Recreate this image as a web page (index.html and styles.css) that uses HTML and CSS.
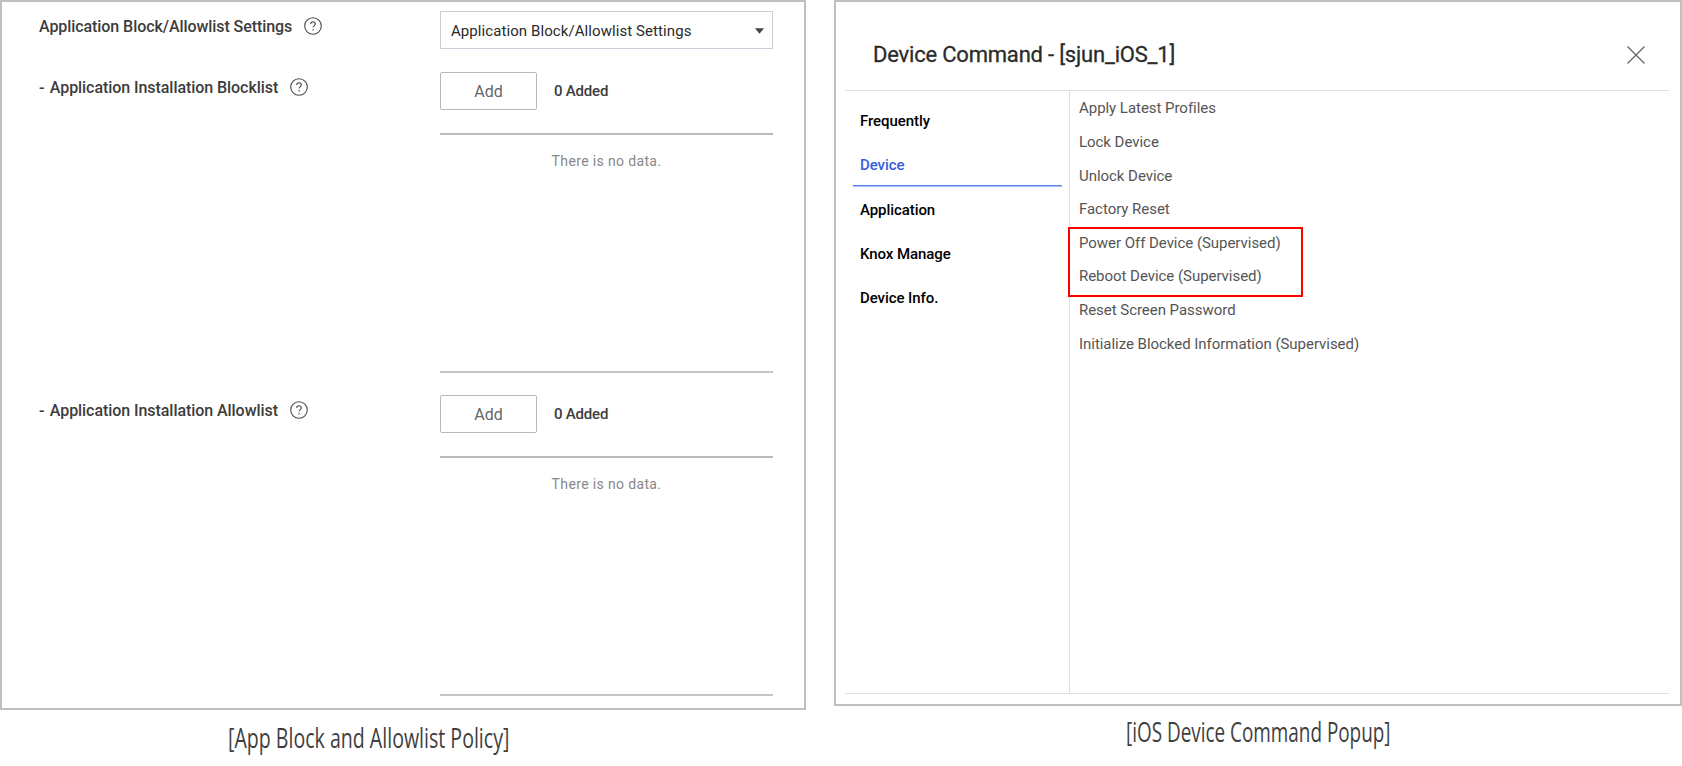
FILE: index.html
```html
<!DOCTYPE html>
<html lang="en">
<head>
<meta charset="utf-8">
<title>Knox Manage</title>
<link rel="stylesheet" href="styles.css">
</head>
<body>
<main class="page">
  <figure class="figure figure-policy">
    <section class="panel policy">
      <div class="setting setting-select">
        <div class="label"><span class="label-main">Application Block/Allowlist Settings</span><svg class="help" viewBox="0 0 18 18"><circle cx="9" cy="9" r="8.3"/><path d="M6.7 7.1C6.7 5.7 7.6 4.8 9 4.8s2.3.9 2.3 2.1c0 1.6-2.2 1.8-2.2 3.7M9.1 12v1.5"/></svg></div>
        <div class="select"><span>Application Block/Allowlist Settings</span><svg class="caret" viewBox="0 0 10 6"><path d="M0 0h10L5 6z"/></svg></div>
      </div>
      <div class="setting setting-list">
        <div class="label"><span class="label-sub"><span class="dash">-</span> Application Installation Blocklist</span><svg class="help" viewBox="0 0 18 18"><circle cx="9" cy="9" r="8.3"/><path d="M6.7 7.1C6.7 5.7 7.6 4.8 9 4.8s2.3.9 2.3 2.1c0 1.6-2.2 1.8-2.2 3.7M9.1 12v1.5"/></svg></div>
        <div class="control">
          <div class="actions"><button class="add">Add</button><span class="count">0 Added</span></div>
          <div class="list">There is no data.</div>
        </div>
      </div>
      <div class="setting setting-list">
        <div class="label"><span class="label-sub"><span class="dash">-</span> Application Installation Allowlist</span><svg class="help" viewBox="0 0 18 18"><circle cx="9" cy="9" r="8.3"/><path d="M6.7 7.1C6.7 5.7 7.6 4.8 9 4.8s2.3.9 2.3 2.1c0 1.6-2.2 1.8-2.2 3.7M9.1 12v1.5"/></svg></div>
        <div class="control">
          <div class="actions"><button class="add">Add</button><span class="count">0 Added</span></div>
          <div class="list">There is no data.</div>
        </div>
      </div>
    </section>
    <figcaption class="caption caption-policy">[App Block and Allowlist Policy]</figcaption>
  </figure>
  <figure class="figure figure-popup">
    <section class="panel popup">
      <header class="popup-head"><h1>Device Command - [sjun_iOS_1]</h1><svg class="close" viewBox="0 0 18 18"><path d="M.5.5l17 17M17.5.5l-17 17"/></svg></header>
      <div class="popup-body">
        <nav class="tabs">
          <a class="tab">Frequently</a>
          <a class="tab active">Device</a>
          <a class="tab">Application</a>
          <a class="tab">Knox Manage</a>
          <a class="tab">Device Info.</a>
        </nav>
        <ul class="commands">
          <li>Apply Latest Profiles</li>
          <li>Lock Device</li>
          <li>Unlock Device</li>
          <li>Factory Reset</li>
          <li class="marked">Power Off Device (Supervised)</li>
          <li>Reboot Device (Supervised)</li>
          <li>Reset Screen Password</li>
          <li>Initialize Blocked Information (Supervised)</li>
        </ul>
      </div>
    </section>
    <figcaption class="caption caption-popup">[iOS Device Command Popup]</figcaption>
  </figure>
</main>
</body>
</html>
```
FILE: styles.css
```css
*, *::before, *::after { box-sizing: border-box; }
body { margin: 0; background: #fff; color: #3c3c3c; font-family: Roboto, "Liberation Sans", sans-serif; font-size: 16px; }
.page { display: flex; gap: 28px; width: 1682px; height: 766px; overflow: hidden; }
.figure { margin: 0; display: flex; flex-direction: column; }
.figure-policy { width: 806px; }
.figure-popup { width: 848px; }
.panel { border: 2px solid #bfbfbf; background: #fff; }

.policy { height: 710px; padding: 9px 30px 0 37px; }
.setting { display: grid; grid-template-columns: 401px 333px; }
.setting-select { height: 61px; }
.setting-list { height: 323px; }
.label { display: flex; align-items: center; gap: 12px; height: 30px; font-weight: 500; white-space: nowrap; }
.label-main { letter-spacing: -.07px; }
.label-sub { letter-spacing: -.06px; }
.dash { margin-right: 1.5px; }
.help { width: 18px; height: 18px; fill: none; stroke: #4a4a4a; stroke-width: 1.1; }
.select { display: flex; align-items: center; justify-content: space-between; height: 38px; padding: 1px 8px 0 10px; border: 1px solid #c9cedb; color: #2a2a2a; font-size: 15px; letter-spacing: .08px; }
.caret { width: 9px; height: 6px; fill: #444; }
.actions { display: flex; align-items: center; height: 38px; gap: 17px; }
.add { width: 97px; height: 38px; padding: 0; border: 1px solid #b8b8b8; border-radius: 2px; background: #fff; color: #666; font: 400 16px Roboto, sans-serif; }
.count { font-weight: 500; font-size: 15px; letter-spacing: -.2px; }
.list { height: 240px; margin-top: 23px; padding-top: 16px; border-top: 2px solid #b9b9c0; border-bottom: 2px solid #c5c5c7; color: #888; font-size: 14px; line-height: 20px; letter-spacing: .36px; text-align: center; }

/* Captions use a horizontally condensed face */
.caption { font-family: "Open Sans", "Noto Sans", sans-serif; font-size: 27px; font-weight: 500; line-height: 36px; color: #3f3f3f; white-space: nowrap; transform-origin: 0 0; }
.caption-policy { margin: 10px 0 0 228px; transform: scaleX(.725); }
.caption-popup { margin: 8px 0 0 292px; transform: scaleX(.7); }

.popup { height: 706px; padding: 0 11px 10px 9px; }
.popup-head { display: flex; align-items: center; justify-content: space-between; height: 89px; padding: 17px 24px 0 28px; border-bottom: 1px solid #dedfe4; }
h1 { margin: 0; font-size: 22px; font-weight: 400; letter-spacing: -.2px; color: #2b2b2b; -webkit-text-stroke: .3px; }
.close { width: 18px; height: 18px; fill: none; stroke: #666; stroke-width: 1.3; }
.popup-body { display: flex; height: 603px; border-bottom: 1px solid #dfdfe3; }
.tabs { width: 225px; padding: 8px 7px 0 8px; border-right: 1px solid #dfdfe6; }
.tab { display: block; height: 44.3px; padding-left: 7px; line-height: 44.4px; font-size: 15px; font-weight: 500; letter-spacing: -.07px; color: #000; }
.tab.active { background: linear-gradient(#5a80ec, #5a80ec) 0 42px / 100% 1.5px no-repeat; color: #3560e0; }
.commands { list-style: none; margin: 0; padding: 1.4px 0 0 9px; }
.commands li { position: relative; height: 33.6px; line-height: 33.6px; font-size: 15px; letter-spacing: -.04px; color: #555; white-space: nowrap; }
.marked::after { content: ""; position: absolute; left: -11px; top: 0; width: 235px; height: 70px; border: 2px solid #f00; }
```
